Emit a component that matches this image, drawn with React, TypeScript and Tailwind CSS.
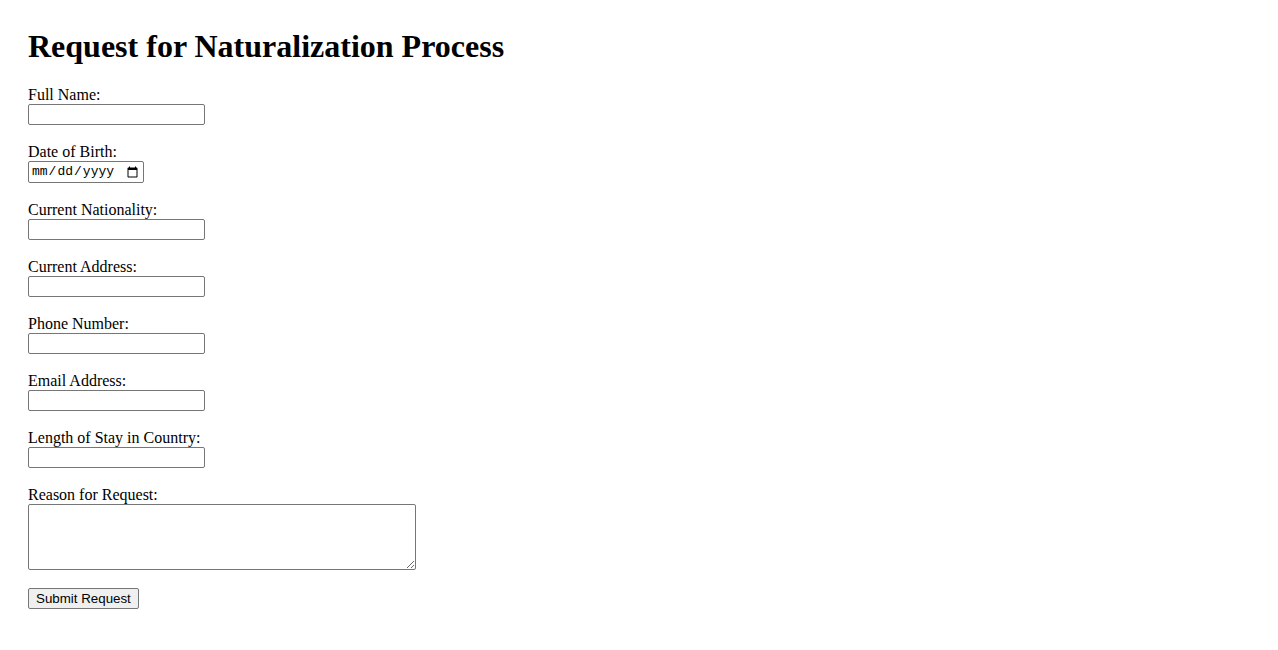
import React from "react";

const fields = [
  { id: "fullName", label: "Full Name:", type: "text" },
  { id: "dob", label: "Date of Birth:", type: "date" },
  { id: "nationality", label: "Current Nationality:", type: "text" },
  { id: "address", label: "Current Address:", type: "text" },
  { id: "phone", label: "Phone Number:", type: "tel" },
  { id: "email", label: "Email Address:", type: "email" },
  { id: "stay", label: "Length of Stay in Country:", type: "text" },
];

export default function App() {
  return (
    <div className="min-h-screen bg-white p-[28px] text-black font-['Liberation_Serif',serif]">
      <h1 className="text-[32px] leading-[37px] font-bold">Request for Naturalization Process</h1>

      <form className="mt-[21px] flex flex-col gap-[18px]" onSubmit={(e) => e.preventDefault()}>
        {fields.map((f) => (
          <div key={f.id} className="flex flex-col items-start">
            <label htmlFor={f.id} className="text-[16px] leading-[18px]">
              {f.label}
            </label>
            {f.type === "date" ? (
              <input
                id={f.id}
                type="date"
                className="w-[116px] h-[22px] border border-[#767676] rounded-[2px] px-[2px] text-[13px] font-['Liberation_Mono',monospace] text-black"
              />
            ) : (
              <input
                id={f.id}
                type={f.type}
                className="w-[177px] h-[21px] border border-[#767676] rounded-[2px] px-[2px] text-[13px] font-['Liberation_Sans',sans-serif]"
              />
            )}
          </div>
        ))}

        <div className="flex flex-col items-start">
          <label htmlFor="reason" className="text-[16px] leading-[18px]">
            Reason for Request:
          </label>
          <textarea
            id="reason"
            className="w-[388px] h-[66px] border border-[#767676] rounded-[2px] p-[2px] text-[13px] font-['Liberation_Mono',monospace]"
          />
        </div>

        <div className="flex items-start">
          <button
            type="submit"
            className="h-[21px] px-[7px] bg-[#efefef] border border-[#767676] rounded-[2px] text-[13.33px] leading-[15px] font-['Liberation_Sans',Arial,sans-serif] text-black"
          >
            Submit Request
          </button>
        </div>
      </form>
    </div>
  );
}
